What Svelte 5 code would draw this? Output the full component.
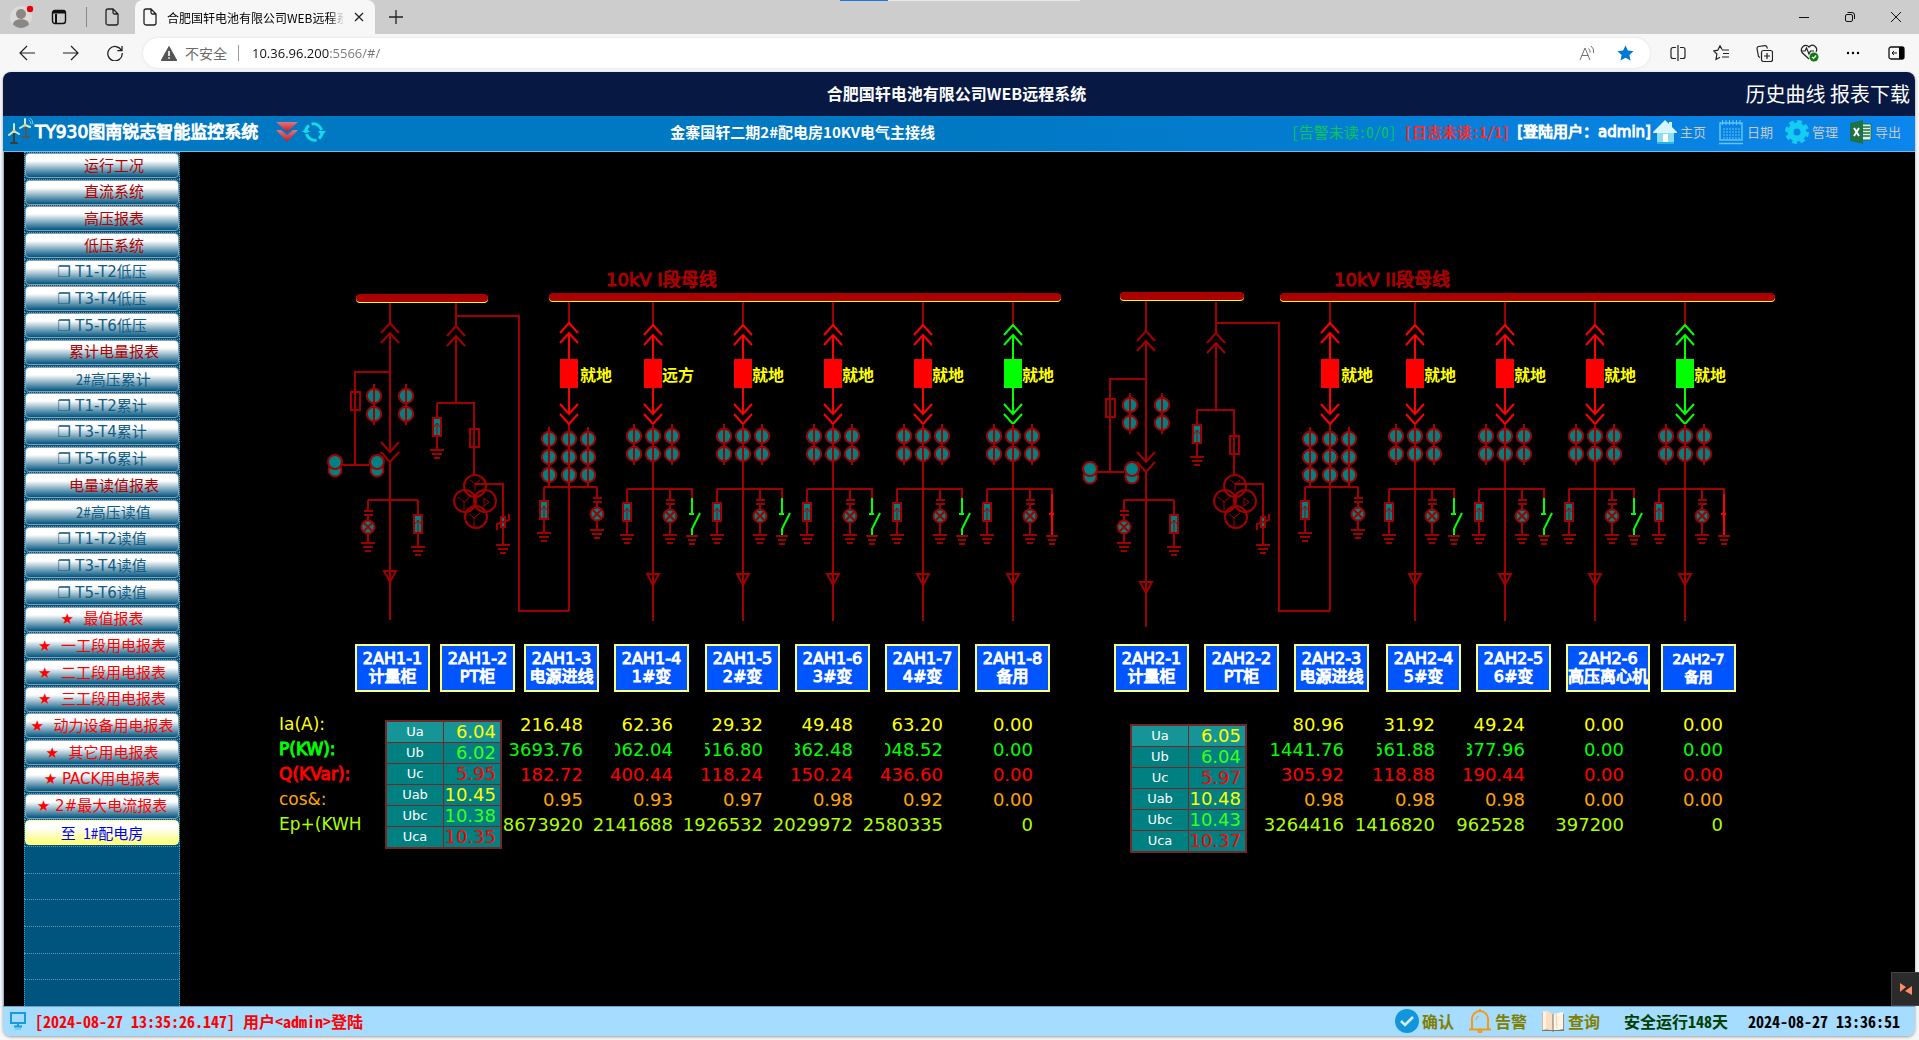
<script lang="ts">
  type MenuItem = { text: string; kind: "group" | "sub" | "alt" | "star" | "jump" };
  type Metering = {
    x: number;
    bus: number;
    plug: number;
    tap: number;
    left: number;
    ct: number;
    socket: number;
    lampX: number;
    arrow: number;
    end: number;
  };
  type Feeder = { x: number; mode: string; on: boolean };

  const menu: MenuItem[] = [
    { text: "     运行工况", kind: "group" },
    { text: "     直流系统", kind: "group" },
    { text: "     高压报表", kind: "group" },
    { text: "     低压系统", kind: "group" },
    { text: "❐ T1-T2低压", kind: "sub" },
    { text: "❐ T3-T4低压", kind: "sub" },
    { text: "❐ T5-T6低压", kind: "sub" },
    { text: "     累计电量报表", kind: "group" },
    { text: "   2#高压累计", kind: "alt" },
    { text: "❐ T1-T2累计", kind: "sub" },
    { text: "❐ T3-T4累计", kind: "sub" },
    { text: "❐ T5-T6累计", kind: "sub" },
    { text: "     电量读值报表", kind: "group" },
    { text: "   2#高压读值", kind: "alt" },
    { text: "❐ T1-T2读值", kind: "sub" },
    { text: "❐ T3-T4读值", kind: "sub" },
    { text: "❐ T5-T6读值", kind: "sub" },
    { text: "★  最值报表", kind: "star" },
    { text: "★  一工段用电报表", kind: "star" },
    { text: "★  二工段用电报表", kind: "star" },
    { text: "★  三工段用电报表", kind: "star" },
    { text: "★  动力设备用电报表", kind: "star" },
    { text: "★  其它用电报表", kind: "star" },
    { text: "★ PACK用电报表", kind: "star" },
    { text: "★ 2#最大电流报表", kind: "star" },
    { text: "至 1#配电房", kind: "jump" },
  ];
  const emptyRows = 6;

  // canvas coordinates start here
  const ox = 180;
  const oy = 152;

  const buses = [
    { x: 356, y: 294, w: 132 },
    { x: 549, y: 293, w: 512 },
    { x: 1120, y: 292, w: 124 },
    { x: 1280, y: 293, w: 495 },
  ];

  const metering: Metering[] = [
    { x: 390, bus: 302, plug: 323, tap: 372, left: 355, ct: 396, socket: 442, lampX: 368, arrow: 571, end: 620 },
    { x: 1146, bus: 301, plug: 331, tap: 379, left: 1110, ct: 405, socket: 452, lampX: 1124, arrow: 582, end: 627 },
  ];

  const pts = [
    { x: 456, dy: 0, to: 569 },
    { x: 1216, dy: 7, to: 1330 },
  ];

  const incoming = [569, 1330];

  const feeders: Feeder[] = [
    { x: 653, mode: "远方", on: true },
    { x: 743, mode: "就地", on: true },
    { x: 833, mode: "就地", on: true },
    { x: 923, mode: "就地", on: true },
    { x: 1013, mode: "就地", on: false },
    { x: 1415, mode: "就地", on: true },
    { x: 1505, mode: "就地", on: true },
    { x: 1595, mode: "就地", on: true },
    { x: 1685, mode: "就地", on: false },
  ];

  const cabinets = [
    { x: 355, name: "2AH1-1", use: "计量柜" },
    { x: 440, name: "2AH1-2", use: "PT柜" },
    { x: 524, name: "2AH1-3", use: "电源进线" },
    { x: 614, name: "2AH1-4", use: "1#变" },
    { x: 705, name: "2AH1-5", use: "2#变" },
    { x: 795, name: "2AH1-6", use: "3#变" },
    { x: 885, name: "2AH1-7", use: "4#变" },
    { x: 975, name: "2AH1-8", use: "备用" },
    { x: 1114, name: "2AH2-1", use: "计量柜" },
    { x: 1204, name: "2AH2-2", use: "PT柜" },
    { x: 1294, name: "2AH2-3", use: "电源进线" },
    { x: 1386, name: "2AH2-4", use: "5#变" },
    { x: 1476, name: "2AH2-5", use: "6#变" },
    { x: 1566, name: "2AH2-6", use: "高压离心机", wide: true },
    { x: 1661, name: "2AH2-7", use: "备用", small: true },
  ];

  const columns = [84, 220, 90, 90, 90, 90, 90, 311, 91, 90, 99, 99];
  const readings = [
    { key: "ia", label: "Ia(A):", values: ["216.48", "62.36", "29.32", "49.48", "63.20", "0.00", "80.96", "31.92", "49.24", "0.00", "0.00"] },
    { key: "p", label: "P(KW):", values: ["3693.76", "062.04", "516.80", "362.48", "048.52", "0.00", "1441.76", "561.88", "377.96", "0.00", "0.00"] },
    { key: "q", label: "Q(KVar):", values: ["182.72", "400.44", "118.24", "150.24", "436.60", "0.00", "305.92", "118.88", "190.44", "0.00", "0.00"] },
    { key: "cos", label: "cos&:", values: ["0.95", "0.93", "0.97", "0.98", "0.92", "0.00", "0.98", "0.98", "0.98", "0.00", "0.00"] },
    { key: "ep", label: "Ep+(KWH)", values: ["8673920", "2141688", "1926532", "2029972", "2580335", "0", "3264416", "1416820", "962528", "397200", "0"] },
  ];

  const phases = ["Ua", "Ub", "Uc", "Uab", "Ubc", "Uca"];
  const voltages = [
    { x: 386, y: 721, values: ["6.04", "6.02", "5.95", "10.45", "10.38", "10.35"] },
    { x: 1131, y: 725, values: ["6.05", "6.04", "5.97", "10.48", "10.43", "10.37"] },
  ];

  let url = $state("10.36.96.200:5566/#/");
</script>

{#snippet page()}
  <svg width="14" height="18" viewBox="0 0 14 18" fill="none" stroke="#222" stroke-width="1.3">
    <path d="M3 1h5l5 5v9a2 2 0 0 1-2 2H3a2 2 0 0 1-2-2V3a2 2 0 0 1 2-2zM8 1v3.500a1.500 1.500 0 0 0 1.500 1.500H13" />
  </svg>
{/snippet}

{#snippet ground(x: number, y: number, w = 7)}
  <path d="M{x - w} {y}h{w * 2}M{x - w + 2} {y + 4}h{w * 2 - 4}M{x - 3} {y + 8}h6" />
{/snippet}

{#snippet arrester(x: number, top: number, y: number, earth: number)}
  <path d="M{x} {top}V{y}M{x} {y + 18}V{earth}" />
  <rect class="teal" x={x - 4} {y} width="8" height="18" />
  <path class="thin" d="M{x} {y + 18}V{y + 5}M{x - 3} {y + 9}l3 -4l3 4" />
  {@render ground(x, earth)}
{/snippet}

{#snippet lamp(x: number, top: number, y: number, earth: number)}
  <path d="M{x} {top}V{y - 16}M{x - 4} {y - 16}h9M{x - 4} {y - 12}h9M{x} {y - 12}V{y - 7}M{x} {y + 7}V{earth}" />
  <circle class="teal" cx={x} cy={y} r="6.500" />
  <path d="M{x - 4} {y - 4}l8 8m0 -8l-8 8" />
  {@render ground(x, earth)}
{/snippet}

{#snippet ct(x: number, y: number, count: number)}
  {#each Array(count) as _, i}
    <circle class="teal" cx={x} cy={y + i * 18} r="7.200" />
  {/each}
  <path d="M{x} {y - 12}V{y + (count - 1) * 18 + 11}" />
{/snippet}

{#snippet up(x: number, y: number)}
  <path d="M{x - 9} {y + 10}l9 -10l9 10M{x - 9} {y + 20}l9 -10l9 10" />
{/snippet}

{#snippet down(x: number, y: number)}
  <path d="M{x - 9} {y}l9 10l9 -10M{x - 9} {y + 10}l9 10l9 -10" />
{/snippet}

{#snippet fuse(x: number, y: number)}
  <rect x={x - 4} {y} width="9" height="18" />
{/snippet}

{#snippet breaker(x: number, y: number, on: boolean)}
  <g class={on ? "closed" : "open"}>
    {@render up(x, y)}
    <path d="M{x} {y + 10}V414" />
    {@render down(x, 404)}
    <rect class="box" x={x - 8} y="360" width="16" height="27" />
  </g>
{/snippet}

<div class="browser">
  <header class="tabs">
    <div class="drag"></div>
    <button class="avatar" aria-label="用户">
      <svg width="24" height="24" viewBox="0 0 24 24">
        <circle cx="11" cy="12" r="11" fill="#dcdad7" />
        <circle cx="11" cy="9" r="5" fill="#8b8784" />
        <path d="M3 19.500c0-7 16-7 16 0c-4 4.500-12 4.500-16 0z" fill="#8b8784" />
        <circle cx="20" cy="4" r="3.200" fill="#e60012" />
      </svg>
    </button>
    <button aria-label="标签页操作">
      <svg width="16" height="16" viewBox="0 0 16 16" fill="none" stroke="#111" stroke-width="1.400">
        <rect x="1.500" y="1.500" width="13" height="13" rx="2.500" />
        <path d="M1.500 3.500h13M5 5v9" stroke-width="2" />
        <path d="M2 2.500h12" stroke-width="2.500" />
      </svg>
    </button>
    <span class="split"></span>
    <button class="pinned" aria-label="新页面">{@render page()}</button>
    <div class="tab">
      {@render page()}
      <span class="tab-title">合肥国轩电池有限公司WEB远程系统</span>
      <button aria-label="关闭标签页">
        <svg width="10" height="10" viewBox="0 0 10 10" stroke="#222" stroke-width="1.300"><path d="M1 1l8 8M9 1l-8 8" /></svg>
      </button>
    </div>
    <button class="new-tab" aria-label="新建标签页">
      <svg width="14" height="14" viewBox="0 0 14 14" stroke="#222" stroke-width="1.300"><path d="M7 0v14M0 7h14" /></svg>
    </button>
    <div class="window-buttons">
      <button aria-label="最小化"><svg width="10" height="10" viewBox="0 0 10 10" stroke="#111"><path d="M0 5.500h10" /></svg></button>
      <button aria-label="还原">
        <svg width="10" height="10" viewBox="0 0 10 10" fill="none" stroke="#111">
          <rect x=".5" y="2.500" width="7" height="7" rx="1.500" /><path d="M2.500 .5h4.500a2.500 2.500 0 0 1 2.500 2.500v4" />
        </svg>
      </button>
      <button aria-label="关闭"><svg width="10" height="10" viewBox="0 0 10 10" stroke="#111"><path d="M0 0l10 10M10 0L0 10" /></svg></button>
    </div>
  </header>

  <nav class="toolbar">
    <button aria-label="后退"><svg width="16" height="16" viewBox="0 0 16 16" fill="none" stroke="#222" stroke-width="1.200"><path d="M16 8H1M8 1L1 8l7 7" /></svg></button>
    <button aria-label="前进"><svg width="16" height="16" viewBox="0 0 16 16" fill="none" stroke="#222" stroke-width="1.200"><path d="M0 8h15M8 1l7 7l-7 7" /></svg></button>
    <button aria-label="刷新"><svg width="16" height="16" viewBox="0 0 16 16" fill="none" stroke="#222" stroke-width="1.300"><path d="M14.500 5.500A7.200 7.200 0 1 0 15.200 8M15 1v4.700h-4.700" /></svg></button>
    <div class="address">
      <svg width="16" height="15" viewBox="0 0 16 15"><path d="M8 .5L15.800 14.500H.2z" fill="#555" stroke="#555" stroke-linejoin="round" /><path d="M8 5v5M8 11.200v1.600" stroke="#fff" stroke-width="1.600" /></svg>
      <span class="unsafe">不安全</span>
      <span class="bar"></span>
      <input aria-label="地址" bind:value={url} />
      <button aria-label="朗读">
        <svg width="16" height="16" viewBox="0 0 16 16" fill="none" stroke="#707070"><path d="M1 15L6 3l5 12M2.800 10.500h6.500M9.500 3.500a4 4 0 0 1 1.500 4M12 1a7 7 0 0 1 2.500 7" /></svg>
      </button>
      <button aria-label="收藏此页">
        <svg width="17" height="16" viewBox="0 0 17 16"><path d="M8.500 .5l2.400 5 5.600.7-4.100 3.800 1.100 5.500-5-2.700-5 2.700 1.100-5.500L.5 6.200l5.600-.7z" fill="#0078d4" /></svg>
      </button>
    </div>
    <div class="tools">
      <button aria-label="拆分屏幕"><svg width="16" height="16" viewBox="0 0 16 16" fill="none" stroke="#222" stroke-width="1.200"><path d="M6 2.500H3A2 2 0 0 0 1 4.500v7a2 2 0 0 0 2 2h3M10 2.500h3a2 2 0 0 1 2 2v7a2 2 0 0 1-2 2h-3M8 0v16" /></svg></button>
      <button aria-label="收藏夹"><svg width="17" height="16" viewBox="0 0 17 16" fill="none" stroke="#222" stroke-width="1.200"><path d="M9 4.500L7 .8 4.800 5.200.8 6l3.100 3-.9 5.500 4-2.200M9 5h7M10 8.500h6M9 12h7" /></svg></button>
      <button aria-label="集锦"><svg width="17" height="17" viewBox="0 0 17 17" fill="none" stroke="#222" stroke-width="1.200"><rect x="5.500" y="5.500" width="11" height="11" rx="2" /><path d="M11 8v6M8 11h6M4 12.500L2.500 11.500 1 3.500a2 2 0 0 1 1.500-2L9 .6a2 2 0 0 1 2 1.500l.3 1.500" /></svg></button>
      <button aria-label="浏览器健康"><svg width="19" height="18" viewBox="0 0 19 18" fill="none" stroke="#222" stroke-width="1.200"><path d="M9 15L2 8.500C-.5 4.500 5-1.500 9 3c4-4.500 9.500 1 7 5M1.500 7H5l1.500-3L9 10l1.500-3H14" /><circle cx="14" cy="13" r="4.500" fill="#107c10" stroke="none" /><path d="M12 13l1.500 1.500 2.700-3" stroke="#fff" /></svg></button>
      <button aria-label="更多"><svg width="16" height="16" viewBox="0 0 16 16"><circle cx="3" cy="8" r="1.200" /><circle cx="8" cy="8" r="1.200" /><circle cx="13" cy="8" r="1.200" /></svg></button>
      <button aria-label="边栏"><svg width="17" height="16" viewBox="0 0 17 16"><rect x="1" y="2" width="15" height="12" rx="2" fill="none" stroke="#111" stroke-width="1.300" /><path d="M11 2h3a2 2 0 0 1 2 2v8a2 2 0 0 1-2 2h-3z" /><path d="M9 8H4M6 6L4 8l2 2" fill="none" stroke="#111" /></svg></button>
    </div>
  </nav>

  <div class="page">
    <header class="site">
      <h1>合肥国轩电池有限公司WEB远程系统</h1>
      <nav><a href="#/history">历史曲线</a> <a href="#/report">报表下载</a></nav>
    </header>

    <header class="system">
      <div class="brand">
        <svg width="26" height="28" viewBox="0 0 26 28" stroke-linecap="round">
          <path d="M6 14v11M3 25h6" stroke="#3c3c3c" stroke-width="2" />
          <path d="M18 8v11M15 19h6" stroke="#555" stroke-width="2" />
          <path d="M6 13V6M6 13L1 17M6 13l5 3M17 7L12 10M17 7l5 2M17 7V1" stroke="#bfeedd" stroke-width="2" />
          <path d="M21 2q2 1 2 4M22 0q3 2 3 6" stroke="#7fc8f0" fill="none" />
          <circle cx="6" cy="13" r="1.500" fill="#ffcf5a" /><circle cx="17" cy="7" r="1.500" fill="#ffcf5a" />
        </svg>
        <strong>TY930图南锐志智能监控系统</strong>
        <button aria-label="展开">
          <svg width="24" height="22" viewBox="0 0 24 22">
            <defs><linearGradient id="red" x2="0" y2="1"><stop stop-color="#e2737b" /><stop offset="1" stop-color="#c11d29" /></linearGradient></defs>
            <path d="M1 1h22L12 11z" fill="url(#red)" /><path d="M1 9h5l6 5 6-5h5L12 21z" fill="url(#red)" />
          </svg>
        </button>
        <button aria-label="刷新数据">
          <svg width="24" height="22" viewBox="0 0 24 22" fill="none" stroke="#12dbe8" stroke-width="3">
            <path d="M4 12A8 8 0 0 1 7 4.500M9.500 3A8.500 8.500 0 0 1 19.500 9M20 11A8.500 8.500 0 0 1 17 17.500M14.500 19A8.500 8.500 0 0 1 4.500 13" />
            <path d="M0 11h8L4 7zM16 10h8l-4 5z" fill="#12dbe8" stroke="none" />
          </svg>
        </button>
      </div>
      <h2>金寨国轩二期2#配电房10KV电气主接线</h2>
      <div class="session">
        <span class="alarm">[告警未读:0/0]</span>
        <span class="log">[日志未读:1/1]</span>
        <span class="user">[登陆用户：admin]</span>
        <button>
          <svg width="24" height="24" viewBox="0 0 24 24"><path d="M4 11h17v12H4z" fill="#8fdcf5" /><path d="M12 0l4 4V2h3v5l5 5v1H0v-1z" fill="#d5f6ff" /><path d="M10 14h5v8h-5z" fill="#fff" /><path d="M4 22h17v2H4z" fill="#27b6dd" /></svg>
          主页
        </button>
        <button>
          <svg width="26" height="26" viewBox="0 0 26 26" fill="none" stroke="#62c4f8">
            <path d="M2 4h22v17H2zM1 24.500h24" stroke-width="1.500" /><path d="M4.500 1v5M8 1v5M11.500 1v5M15 1v5M18.500 1v5M22 1v5" /><path d="M5 10h17M5 13h17M5 16h17M5 19h17" stroke-dasharray="2 1" />
          </svg>
          日期
        </button>
        <button>
          <svg width="24" height="24" viewBox="0 0 24 24"><circle cx="12" cy="12" r="6.500" fill="none" stroke="#14cdf2" stroke-width="6" /><circle cx="12" cy="12" r="10" fill="none" stroke="#14cdf2" stroke-width="4" stroke-dasharray="4.500 3.350" /></svg>
          管理
        </button>
        <button>
          <svg width="22" height="24" viewBox="0 0 22 24"><path d="M11 4h10v16H11z" fill="#dff0e5" stroke="#1f7245" /><path d="M13 7h7M13 10h7M13 13h7M13 16h7" stroke="#1f7245" stroke-width="1.500" /><path d="M0 3l13-3v24L0 21z" fill="#1f7245" /><path d="M4 8l5 8M9 8l-5 8" stroke="#fff" stroke-width="2" /></svg>
          导出
        </button>
      </div>
    </header>

    <main>
      <nav class="side">
        {#each menu as item}
          <div class="row"><button class={item.kind}>{item.text}</button></div>
        {/each}
        {#each Array(emptyRows) as _}
          <div class="row"></div>
        {/each}
      </nav>

      <section class="canvas">
        <svg class="diagram" width="1735" height="854" viewBox="{ox} {oy} 1735 854">
          {#each metering as m}
            <path d="M{m.x} {m.bus}V{m.plug}M{m.x} {m.plug + 10}V{m.socket + 10}M{m.x} {m.socket + 20}V{m.end}" />
            <path d="M{m.x} {m.tap}H{m.left}V{m.tap + 93}M{m.left - 13} {m.tap + 93}h27" />
            {@render up(m.x, m.plug)}
            {@render down(m.x, m.socket)}
            {@render fuse(m.left, m.tap + 20)}
            {@render ct(m.x - 16, m.ct, 2)}
            {@render ct(m.x + 16, m.ct, 2)}
            {#each [m.left - 20, m.left + 22] as x}
              <circle class="teal" cx={x} cy={m.tap + 98} r="6.500" />
              <circle class="teal" cx={x} cy={m.tap + 90} r="7" />
            {/each}
            <path d="M{m.lampX} 500h50" />
            {@render lamp(m.lampX, 500, 527, 543)}
            {@render arrester(m.lampX + 50, 500, 515, 547)}
            <path d="M{m.x - 6} {m.arrow}h12l-6 11z" />
          {/each}

          {#each pts as p}
            <path d="M{p.x} 302V{p.dy + 326}M{p.x} {p.dy + 336}V{p.dy + 403}M{p.x} {p.dy + 316}h63V611H{p.to}" />
            {@render up(p.x, p.dy + 326)}
            <path d="M{p.x - 19} {p.dy + 403}h37V475" />
            {@render arrester(p.x - 19, p.dy + 403, p.dy + 418, p.dy + 450)}
            {@render fuse(p.x + 18, p.dy + 429)}
            <circle cx={p.x + 19} cy="486" r="11" />
            <circle cx={p.x + 9} cy="501" r="11" />
            <circle cx={p.x + 29} cy="501" r="11" />
            <circle cx={p.x + 20} cy="517" r="11" />
            <path class="thin" d="M{p.x + 19} 491v-7l-5 -4m5 4l5 -4M{p.x + 8} 510v-8l-6 -5m6 5l6 -5M{p.x + 18} 527v-9l-5 -4m5 4l6 -5M{p.x + 28} 498v8l5 -4z" />
            <path d="M{p.x + 19} 484h28v61" />
            <rect class="teal" x={p.x + 45} y="517" width="4" height="10" />
            <path d="M{p.x + 53} 514v6l-12 4v6" />
            {@render ground(p.x + 47, 545)}
          {/each}

          {#each incoming as x}
            <path d="M{x} 301V323M{x} 424V611M{x - 25} 487h53" />
            {@render breaker(x, 323, true)}
            {@render ct(x - 20, 439, 3)}
            {@render ct(x, 439, 3)}
            {@render ct(x + 19, 439, 3)}
            {@render arrester(x - 25, 487, 501, 533)}
            {@render lamp(x + 28, 487, 514, 530)}
            <text class="mode" x={x + 11} y="381">就地</text>
          {/each}

          {#each feeders as f}
            <path d="M{f.x} 301V325M{f.x} 424V621M{f.x - 26} 489h65v9" />
            {@render breaker(f.x, 325, f.on)}
            {@render ct(f.x - 19, 436, 2)}
            {@render ct(f.x, 436, 2)}
            {@render ct(f.x + 19, 436, 2)}
            {@render arrester(f.x - 26, 489, 503, 535)}
            {@render lamp(f.x + 17, 489, 516, 535)}
            {@render ground(f.x + 39, 536, 6)}
            {#if f.on}
              <path class="open" d="M{f.x + 39} 498v16M{f.x + 36} 514h5M{f.x + 47} 513l-8 16v6" />
            {:else}
              <path class="closed" d="M{f.x + 39} 494v41M{f.x + 36} 514h5" />
            {/if}
            <path d="M{f.x - 6} 574h12l-6 11z" />
            <text class="mode" x={f.x + 9} y="381">{f.mode}</text>
          {/each}

          {#each buses as b}
            <rect class="bus-edge" x={b.x} y={b.y + 1} width={b.w} height="8" rx="4" />
            <rect class="bus" x={b.x} y={b.y} width={b.w} height="8" rx="4" />
          {/each}
          <text class="bus-name" x="606" y="286">10kV I段母线</text>
          <text class="bus-name" x="1334" y="286">10kV II段母线</text>
        </svg>

        {#each cabinets as c}
          <button class="cabinet" class:wide={c.wide} class:small={c.small} style="left: {c.x - ox}px; top: {644 - oy}px">
            <span>{c.name}</span>
            <span>{c.use}</span>
          </button>
        {/each}

        <table class="readings" style="left: {279 - ox}px; top: {712 - oy}px">
          <colgroup>
            {#each columns as w}<col style="width: {w}px" />{/each}
          </colgroup>
          <tbody>
            {#each readings as r}
              <tr class={r.key}>
                <th scope="row">{r.label}</th>
                {#each r.values as v}
                  <td><span class:clip={r.key === "p" && v.length === 6}>{v}</span></td>
                {/each}
              </tr>
            {/each}
          </tbody>
        </table>

        {#each voltages as t}
          <table class="voltage" style="left: {t.x - ox}px; top: {t.y - oy}px">
            <tbody>
              {#each t.values as v, i}
                <tr><th scope="row">{phases[i]}</th><td>{v}</td></tr>
              {/each}
            </tbody>
          </table>
        {/each}
      </section>
    </main>

    <footer>
      <svg width="18" height="20" viewBox="0 0 18 20" fill="none" stroke="#1a9be0" stroke-width="2">
        <rect x="2" y="2" width="14" height="10" /><path d="M9 12v3M5 15.500h8" /><path d="M6 18h6" stroke="#7ccdf2" />
      </svg>
      <span class="message">[2024-08-27 13:35:26.147] 用户&lt;admin&gt;登陆</span>
      <button>
        <svg width="24" height="24" viewBox="0 0 24 24"><circle cx="12" cy="12" r="12" fill="#1296db" /><path d="M6 12l4 4 8-8" fill="none" stroke="#d7efff" stroke-width="2.500" /></svg>
        确认
      </button>
      <button>
        <svg width="24" height="24" viewBox="0 0 24 24" fill="none" stroke="#f59a11" stroke-width="2"><path d="M1 20.500h22M4 20V10a8 8 0 0 1 16 0v10M12 0v2" /><path d="M8 11a4 4 0 0 1 3-4" stroke-width="1" /><circle cx="12" cy="22" r="1.500" /></svg>
        告警
      </button>
      <button>
        <svg width="24" height="24" viewBox="0 0 24 24"><path d="M1 4h10v18H1z" fill="#c9b8a5" /><path d="M12 5h11v17H12z" fill="#9a8a7a" /><path d="M2 2l5 1v16l-5 2z" fill="#fff3df" /><path d="M5 1l7 4v18l-7-4z" fill="#f6dfc2" /><path d="M12 5l10-2v17l-10 2z" fill="#fff5e6" /><path d="M12 5v18M1 21.500h22" stroke="#7d7268" /><path d="M15 4l1 16" stroke="#ead2b2" /></svg>
        查询
      </button>
      <span class="days">安全运行148天</span>
      <time>2024-08-27 13:36:51</time>
    </footer>
  </div>

  <button class="float" aria-label="悬浮工具">
    <svg width="12" height="14" viewBox="0 0 12 14" fill="#ff8a66"><path d="M0 1l6 4-6 5zM12 4v9L5 9z" /></svg>
  </button>
</div>

<style>
  :global(body) {
    margin: 0;
  }
  .browser {
    position: relative;
    display: flex;
    flex-direction: column;
    min-height: 100vh;
    background: #f7f7f7;
    font-family: "Noto Sans CJK SC", "DejaVu Sans", sans-serif;
  }
  button {
    display: flex;
    align-items: center;
    justify-content: center;
    padding: 0;
    border: 0;
    background: none;
    font: inherit;
    color: inherit;
    white-space: nowrap;
  }
  svg {
    display: block;
    flex: none;
  }
  a {
    color: inherit;
    text-decoration: none;
  }

  .tabs {
    position: relative;
    display: flex;
    align-items: center;
    height: 34px;
    padding-left: 10px;
    background: #cdcdcd;
  }
  .drag {
    position: absolute;
    left: 840px;
    top: 0;
    width: 240px;
    height: 1px;
    background: linear-gradient(to right, #1a7ad4 48px, #e8e8e8 48px);
  }
  .avatar {
    margin-right: 17px;
  }
  .split {
    width: 1px;
    height: 20px;
    margin: 0 18px 0 19px;
    background: #888;
  }
  .tab {
    display: flex;
    align-items: center;
    gap: 10px;
    box-sizing: border-box;
    width: 240px;
    height: 34px;
    margin: 0 14px 0 16px;
    padding: 0 11px 0 8px;
    border-radius: 8px 8px 0 0;
    background: #f7f7f7;
  }
  .tab-title {
    flex: 1;
    overflow: hidden;
    font-size: 12px;
    white-space: nowrap;
    mask-image: linear-gradient(to right, #000 92%, transparent);
  }
  .window-buttons {
    display: flex;
    margin-left: auto;
  }
  .window-buttons button {
    width: 46px;
    height: 34px;
  }

  .toolbar {
    display: flex;
    align-items: center;
    gap: 28px;
    height: 38px;
    padding-left: 19px;
  }
  .address {
    display: flex;
    flex: 1;
    align-items: center;
    height: 30px;
    margin-left: -8px;
    padding: 0 16px 0 18px;
    border-radius: 15px;
    background: #fff;
    box-shadow: 0 0 3px #ddd;
  }
  .unsafe {
    margin-left: 8px;
    font-size: 14px;
    color: #6b6b6b;
  }
  .bar {
    width: 1px;
    height: 16px;
    margin: 0 13px 0 11px;
    background: #999;
  }
  .address input {
    flex: 1;
    min-width: 0;
    padding: 0;
    border: 0;
    outline: 0;
    font-family: "Open Sans", sans-serif;
    font-size: 13px;
    color: transparent;
    background: linear-gradient(to right, #111 78px, #767676 78px);
    -webkit-background-clip: text;
    background-clip: text;
  }
  .address button + button {
    margin-left: 22px;
  }
  .tools {
    display: flex;
    justify-content: space-between;
    width: 235px;
    margin-left: -8px;
    padding-right: 14px;
  }

  .page {
    display: flex;
    flex: 1;
    flex-direction: column;
    margin: 0 4px 4px 3px;
    border-radius: 8px;
    overflow: hidden;
    box-shadow: 0 1px 3px #999;
  }
  .site {
    display: grid;
    grid-template-columns: 1fr auto 1fr;
    align-items: center;
    box-sizing: border-box;
    height: 44px;
    padding: 0 5px 2px 0;
    background: #071843;
    color: #fff;
  }
  .site h1 {
    grid-column: 2;
    margin: 0;
    font-size: 16px;
    line-height: 24px;
  }
  .site nav {
    text-align: right;
    font-size: 20px;
  }

  .system {
    display: flex;
    align-items: center;
    box-sizing: border-box;
    height: 36px;
    padding-bottom: 3px;
    border-bottom: 1px solid #7db8e0;
    background: linear-gradient(to right, #0078c2 50%, #0a86ec);
    color: #fff;
  }
  .brand {
    display: flex;
    align-items: center;
    gap: 5px;
    padding-left: 5px;
  }
  .brand strong {
    margin: 0 12px 0 -4px;
    font-family: "DejaVu Sans", "Noto Sans CJK SC", sans-serif;
    font-size: 17px;
    font-weight: normal;
    line-height: 24px;
    white-space: nowrap;
    -webkit-text-stroke: 1px #fff;
  }
  .brand strong + button + button {
    margin-left: -2px;
  }
  .system h2 {
    flex: 1;
    margin: 0;
    padding-right: 12px;
    font-size: 15px;
    line-height: 24px;
    text-align: center;
  }
  .session {
    display: flex;
    align-items: center;
    padding-right: 14px;
    font-size: 15px;
    line-height: 24px;
    white-space: nowrap;
  }
  .alarm,
  .log {
    margin-right: 8px;
    font-feature-settings: "hwid";
  }
  .alarm {
    color: #06c952;
  }
  .log {
    font-weight: bold;
    color: #ff2a2a;
  }
  .user {
    font-family: "DejaVu Sans", "Noto Sans CJK SC", sans-serif;
    -webkit-text-stroke: 1px #fff;
  }
  .session button {
    gap: 3px;
    margin-left: 12px;
    font-size: 13px;
    color: #c3c9cf;
  }
  .session .user + button {
    margin-left: 2px;
  }

  main {
    display: flex;
    flex: 1;
    padding-left: 20px;
    border-left: 1px solid #8ab8d8;
    background: #000;
  }
  .side {
    display: flex;
    flex-direction: column;
    box-sizing: border-box;
    width: 156px;
    background: #00557f;
    font-family: "DejaVu Sans", "Noto Sans CJK SC", sans-serif;
    font-size: 15px;
  }
  .row {
    display: flex;
    flex: 1;
    border: 1px dotted #5c9ab4;
    border-bottom-width: 0;
  }
  .row button {
    flex: 1;
    min-width: 0;
    height: 25px;
    line-height: 20px;
    white-space: pre;
    border: 1px solid #8b9db0;
    border-radius: 4px;
    background: linear-gradient(#fff 30%, #00557f);
  }
  .row .group {
    color: #b00000;
  }
  .row .sub,
  .row .alt {
    color: #0f5c86;
  }
  .row .alt {
    font-family: "Noto Sans CJK SC", sans-serif;
    font-feature-settings: "hwid";
  }
  .row .star {
    color: #f00;
  }
  .row .jump {
    font-family: "Noto Sans CJK SC", sans-serif;
    font-feature-settings: "hwid";
    color: #00f;
    border-color: #ffff9c;
    background: linear-gradient(#fff 30%, #ffff70);
  }

  .canvas {
    position: relative;
    flex: 1;
    min-width: 0;
    overflow: hidden;
    font-family: "DejaVu Sans", "Noto Sans CJK SC", sans-serif;
  }
  .diagram {
    fill: none;
    stroke: #a00000;
    stroke-width: 2;
  }
  .diagram .teal {
    fill: #008080;
  }
  .diagram .thin {
    stroke-width: 1;
  }
  .diagram .closed {
    stroke: #f00;
  }
  .diagram .open {
    stroke: #0f0;
  }
  .diagram .box {
    fill: #f00;
  }
  .diagram .open .box {
    fill: #0f0;
  }
  .diagram .bus {
    fill: #a00;
    stroke: none;
  }
  .diagram .bus-edge {
    fill: #ff0;
    stroke: none;
  }
  .diagram .bus-name {
    font-size: 18px;
    fill: #a00;
    stroke: #a00;
    stroke-width: 1;
  }
  .diagram .mode {
    font-size: 16px;
    font-weight: bold;
    fill: #ff0;
    stroke: none;
  }

  .cabinet {
    position: absolute;
    flex-direction: column;
    width: 75px;
    height: 48px;
    border: 2px solid #ffff7f;
    background: #05f;
    color: #fff;
    font-size: 16px;
    line-height: 18px;
    -webkit-text-stroke: 1px #fff;
  }
  .cabinet.wide {
    width: 84px;
  }
  .cabinet.small {
    font-size: 14px;
  }

  table {
    position: absolute;
    border-collapse: collapse;
  }
  th,
  td {
    padding: 0;
    font-weight: normal;
    white-space: nowrap;
  }
  .readings {
    width: 1444px;
    table-layout: fixed;
    font-size: 18px;
    line-height: 25px;
  }
  .readings th {
    overflow: hidden;
    text-align: left;
    font-size: 17px;
  }
  .readings td {
    text-align: right;
  }
  .readings tr {
    height: 25px;
  }
  .clip {
    display: flex;
    justify-content: flex-end;
    width: 58px;
    margin-left: auto;
    overflow: hidden;
  }
  .ia {
    color: #ff0;
  }
  .p {
    color: #0f0;
  }
  .q {
    color: #f00;
  }
  .p th,
  .q th {
    -webkit-text-stroke: 1px;
  }
  .cos {
    color: #ffa500;
  }
  .ep {
    color: #adff00;
  }

  .voltage {
    width: 115px;
    table-layout: fixed;
    background: #008080;
    outline: 1px solid #6b2a2a;
  }
  .voltage th,
  .voltage td {
    height: 20px;
    border: 1px solid #7a2525;
    line-height: 20px;
  }
  .voltage th {
    font-size: 13px;
    color: #fff;
  }
  .voltage td {
    padding-right: 4px;
    font-size: 18px;
    text-align: right;
  }
  .voltage tr:first-child {
    background: #159595;
  }
  .voltage tr:nth-child(3n + 1) td {
    color: #ff0;
  }
  .voltage tr:nth-child(3n + 2) td {
    color: #3cff14;
  }
  .voltage tr:nth-child(3n) td {
    color: #f00;
  }

  footer {
    display: flex;
    align-items: center;
    box-sizing: border-box;
    height: 30px;
    padding: 0 15px 2px 6px;
    border-top: 1px solid #6fa3c4;
    background: #a5dcff;
    font-size: 16px;
    font-weight: bold;
    line-height: 24px;
    font-feature-settings: "hwid";
  }
  .message {
    margin: 0 auto 0 8px;
    color: #f00;
  }
  footer button {
    gap: 3px;
    margin-right: 14px;
    color: #808000;
  }
  .days {
    margin: 0 20px 0 10px;
    color: #004000;
  }

  .float {
    position: absolute;
    right: 0;
    bottom: 34px;
    width: 28px;
    height: 34px;
    border: 1px solid #444;
    border-right: 0;
    background: #2b2b2b;
  }
</style>
